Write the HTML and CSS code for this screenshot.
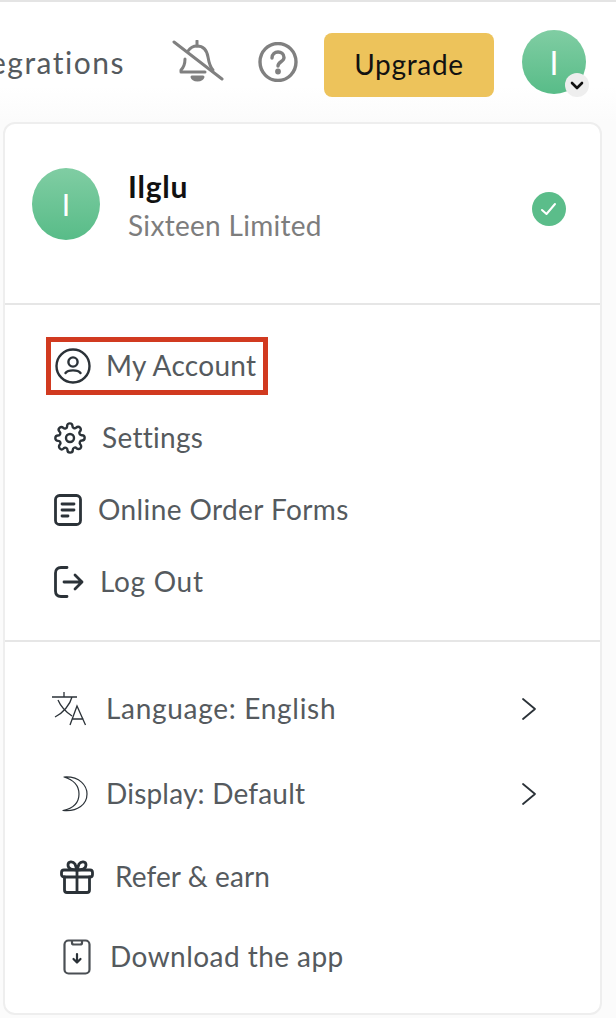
FILE: index.html
```html
<!DOCTYPE html>
<html>

<head>
    <meta name="viewport" content="width=device-width, initial-scale=1.0" charset="utf-8">
    <link rel="stylesheet" href="styles.css">
</head>

<body>
    <header class="topbar">
        <span class="nav-link">Integrations</span>
        <svg class="bell" width="52" height="42" viewBox="0 0 52 42" fill="none" stroke="#808080" stroke-width="3" stroke-linecap="round" stroke-linejoin="round">
            <path d="M2 2 L50 39" />
            <path d="M16 11 C18 8 21 6 25 6 C32 6 35 11 36 17 C37 23 38 27 41 30" />
            <path d="M13 19 C13 24 11 28 9 30 L9 32 L33 32" />
            <path d="M25 1 V6" />
            <path d="M20 37 H31 C30 41 21 41 20 37 Z" fill="#808080" />
        </svg>
        <svg class="help" width="40" height="40" viewBox="0 0 40 40" fill="none" stroke="#808080" stroke-width="3.4" stroke-linecap="round">
            <ellipse cx="20" cy="20" rx="18" ry="18.5" />
            <path d="M14 16 C14 8 26 8 26 15.5 C26 20 20 19.5 20 24" />
            <circle cx="20" cy="29.5" r="1.2" fill="#808080" />
        </svg>
        <button class="upgrade">Upgrade</button>
        <div class="avatar avatar-top">
            I
            <span class="caret">
                <svg width="14" height="9" viewBox="0 0 14 9" fill="none" stroke="#111" stroke-width="2.6" stroke-linecap="round" stroke-linejoin="round"><path d="M2 2 L7 7 L12 2" /></svg>
            </span>
        </div>
    </header>

    <div class="menu">
        <section class="profile">
            <div class="avatar avatar-big">I</div>
            <div class="who">
                <div class="who-name">Ilglu</div>
                <div class="who-org">Sixteen Limited</div>
            </div>
            <span class="tick">
                <svg width="18" height="16" viewBox="0 0 18 16" fill="none" stroke="#fff" stroke-width="2" stroke-linecap="round" stroke-linejoin="round"><path d="M2 9 L6.5 13 L15 3" /></svg>
            </span>
        </section>

        <section class="group group-main">
            <div class="row row-account">
                <div class="marked">
                    <svg width="36" height="36" viewBox="0 0 36 36" fill="none" stroke="#2b3238" stroke-width="2.4" stroke-linecap="round">
                        <circle cx="18" cy="18" r="16.5" />
                        <circle cx="18" cy="14" r="4.6" />
                        <path d="M10.5 25 C13 21.5 23 21.5 25.5 25" />
                    </svg>
                    <span>My Account</span>
                </div>
            </div>
            <div class="row row-settings">
                <svg width="32" height="32" viewBox="0 0 24 24" fill="none" stroke="#2b3238" stroke-width="1.8" stroke-linecap="round" stroke-linejoin="round">
                    <circle cx="12" cy="12" r="3" />
                    <path d="M19.4 15a1.65 1.65 0 0 0 .33 1.82l.06.06a2 2 0 1 1-2.83 2.83l-.06-.06a1.65 1.65 0 0 0-2.8 1.17V21a2 2 0 1 1-4 0v-.09a1.65 1.65 0 0 0-2.87-1.11l-.06.06a2 2 0 1 1-2.83-2.83l.06-.06a1.65 1.65 0 0 0-1.17-2.8H3a2 2 0 1 1 0-4h.09A1.65 1.65 0 0 0 4.2 7.3l-.06-.06a2 2 0 1 1 2.83-2.83l.06.06a1.65 1.65 0 0 0 2.8-1.17V3a2 2 0 1 1 4 0v.09a1.65 1.65 0 0 0 2.8 1.17l.06-.06a2 2 0 1 1 2.83 2.83l-.06.06a1.65 1.65 0 0 0 1.17 2.8H21a2 2 0 1 1 0 4h-.09a1.65 1.65 0 0 0-1.51 1z" />
                </svg>
                <span>Settings</span>
            </div>
            <div class="row row-forms">
                <svg width="28" height="32" viewBox="0 0 28 32" fill="none" stroke="#2b3238" stroke-width="2.8" stroke-linecap="round">
                    <rect x="1.5" y="1.5" width="25" height="29" rx="4" />
                    <path d="M8 10 H20 M8 16 H20 M8 22 H14" />
                </svg>
                <span>Online Order Forms</span>
            </div>
            <div class="row row-logout">
                <svg width="30" height="32" viewBox="0 0 30 32" fill="none" stroke="#2b3238" stroke-width="2.8" stroke-linecap="round" stroke-linejoin="round">
                    <path d="M13 1.5 H7 C3.5 1.5 1.5 3.5 1.5 7 V25 C1.5 28.5 3.5 30.5 7 30.5 H13" />
                    <path d="M10 16 H28 M21 9 L28 16 L21 23" />
                </svg>
                <span>Log Out</span>
            </div>
        </section>

        <section class="group group-extra">
            <div class="row row-lang">
                <svg width="36" height="34" viewBox="0 0 36 34" fill="none" stroke="#2b3238" stroke-width="1.3">
                    <path d="M1 5 H26 M13 0 V5 M21 5 C19 13 12 21 4 25 M7 8 C10 15 15 20 21 24" />
                    <path d="M19 33 L26 14 L34.5 33 M21.5 27 H32.5" />
                </svg>
                <span>Language: English</span>
                <svg class="chev" width="16" height="24" viewBox="0 0 16 24" fill="none" stroke="#2b3238" stroke-width="1.8" stroke-linecap="round" stroke-linejoin="round"><path d="M2 2 L14 12 L2 22" /></svg>
            </div>
            <div class="row row-display">
                <svg width="26" height="36" viewBox="0 0 26 36" fill="none" stroke="#2b3238" stroke-width="1.2" stroke-linejoin="round">
                    <path d="M2 1 C18 0 25 10 25 18 C25 28 16 36 1 34.5 C13 32 17 25 17 18 C17 10 12 4 2 1 Z" />
                </svg>
                <span>Display: Default</span>
                <svg class="chev" width="16" height="24" viewBox="0 0 16 24" fill="none" stroke="#2b3238" stroke-width="1.8" stroke-linecap="round" stroke-linejoin="round"><path d="M2 2 L14 12 L2 22" /></svg>
            </div>
            <div class="row row-refer">
                <svg width="34" height="34" viewBox="0 0 34 34" fill="none" stroke="#2b3238" stroke-width="2.8" stroke-linecap="round" stroke-linejoin="round">
                    <rect x="1.5" y="10" width="31" height="7" rx="2.5" />
                    <path d="M4.5 17 V30 C4.5 31.5 5.5 32.5 7 32.5 H27 C28.5 32.5 29.5 31.5 29.5 30 V17 M17 10 V32.5" />
                    <path d="M17 10 C13 10 8 9 8 5 C8 1 13 1 15 4 L17 10 L19 4 C21 1 26 1 26 5 C26 9 21 10 17 10 Z" />
                </svg>
                <span>Refer &amp; earn</span>
            </div>
            <div class="row row-app">
                <svg width="28" height="36" viewBox="0 0 28 36" fill="none" stroke="#4a4f54" stroke-width="2.2" stroke-linecap="round" stroke-linejoin="round">
                    <rect x="1.5" y="1.5" width="25" height="33" rx="4" />
                    <path d="M9 2 V4 C9 5 10 5.5 11 5.5 H17 C18 5.5 19 5 19 4 V2" />
                    <path d="M14 15 V23 M10.5 20 L14 23.5 L17.5 20" stroke="#2b3238" />
                </svg>
                <span>Download the app</span>
            </div>
        </section>
    </div>
</body>

</html>
```

FILE: styles.css
```css
html, body {
    height: 100%;
}

body {
    margin: 0;
    overflow: hidden;
    background-color: #fbfbfb;
    border-top: 2px solid #e4e4e4;
    box-sizing: border-box;
    font-family: Lato, "Noto Sans", sans-serif;
    color: #555a5e;
}

.topbar {
    height: 120px;
    padding: 6px 30px 0 0;
    box-sizing: border-box;
    display: flex;
    justify-content: flex-end;
    align-items: center;
    background: linear-gradient(#fff 70%, #fbfbfb);
    white-space: nowrap;
}

.nav-link {
    font-size: 30px;
    letter-spacing: 1.5px;
    margin: 0 47px 7px 0;
    flex-shrink: 0;
}

.bell {
    flex-shrink: 0;
    margin: 0 34px 9px 0;
}

.help {
    flex-shrink: 0;
    margin: 0 26px 6px 0;
}

.upgrade {
    width: 170px;
    height: 64px;
    flex-shrink: 0;
    margin-right: 28px;
    padding: 0 0 3px;
    border: none;
    border-radius: 8px;
    background-color: #edc35b;
    color: #111;
    font-family: inherit;
    font-size: 28px;
    letter-spacing: 0.7px;
}

.avatar {
    display: flex;
    align-items: center;
    justify-content: center;
    flex-shrink: 0;
    border-radius: 50%;
    background: linear-gradient(#80cda3, #58bc88);
    color: #fff;
}

.avatar-top {
    position: relative;
    width: 64px;
    height: 64px;
    font-size: 32px;
    margin-bottom: 6px;
}

.caret {
    position: absolute;
    right: -3px;
    bottom: -3px;
    width: 24px;
    height: 24px;
    border-radius: 50%;
    background-color: #eee;
    display: flex;
    align-items: center;
    justify-content: center;
}

.menu {
    width: 599px;
    height: 893px;
    margin-left: 3px;
    box-sizing: border-box;
    background-color: #fff;
    border: 2px solid #eeeeee;
    border-radius: 12px;
    display: flex;
    flex-direction: column;
}

.profile {
    height: 181px;
    padding: 0 34px 0 27px;
    box-sizing: border-box;
    display: flex;
    align-items: center;
    border-bottom: 2px solid #e6e6e6;
}

.avatar-big {
    width: 68px;
    height: 72px;
    font-size: 30px;
    margin-bottom: 20px;
}

.who {
    flex: 1;
    margin-left: 28px;
    margin-bottom: 15px;
}

.who-name {
    font-size: 30px;
    font-weight: 700;
    letter-spacing: 0.8px;
    line-height: 38px;
    color: #111;
}

.who-org {
    font-size: 28px;
    letter-spacing: 0.3px;
    line-height: 40px;
    color: #7d7d7d;
}

.tick {
    width: 34px;
    height: 34px;
    margin-bottom: 10px;
    border-radius: 50%;
    background-color: #5bbd8a;
    display: flex;
    align-items: center;
    justify-content: center;
}

.group {
    box-sizing: border-box;
    display: flex;
    flex-direction: column;
}

.group-main {
    height: 337px;
    padding-top: 25px;
    border-bottom: 2px solid #e6e6e6;
}

.group-extra {
    flex: 1;
    padding-top: 25px;
}

.row {
    flex-shrink: 0;
    display: flex;
    align-items: center;
    font-size: 28px;
    letter-spacing: 0.3px;
    white-space: nowrap;
}

.row span {
    margin-bottom: 3px;
}

.group-main .row {
    height: 72px;
    padding-left: 49px;
}

.marked {
    display: flex;
    align-items: center;
    gap: 15px;
    height: 58px;
    box-sizing: border-box;
    margin-left: -8px;
    padding: 0 7px 0 4px;
    border: 5px solid #d13a20;
}

.row-settings { gap: 16px; }
.row-forms { gap: 16px; letter-spacing: 0.4px; }
.row-logout { gap: 16px; letter-spacing: 0.7px; }

.group-extra .row {
    padding-right: 63px;
}

.row-lang {
    height: 84px;
    padding-left: 46px;
    gap: 19px;
    letter-spacing: 0.7px;
}

.row-display {
    height: 86px;
    padding-left: 57px;
    gap: 18px;
    letter-spacing: 0.2px;
}

.row-refer {
    height: 80px;
    padding-left: 55px;
    gap: 21px;
    letter-spacing: 0.1px;
}

.row-app {
    height: 80px;
    padding-left: 58px;
    gap: 19px;
    letter-spacing: 0.45px;
}

.chev {
    margin-left: auto;
}
```
